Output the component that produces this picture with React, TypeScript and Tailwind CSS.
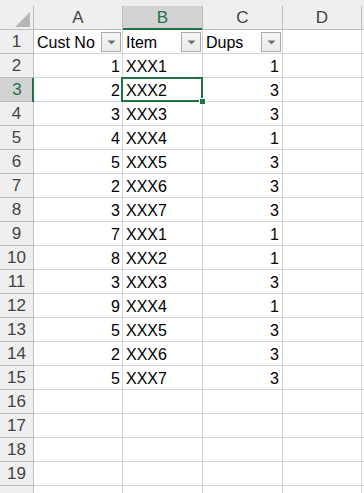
import React from "react";

const data: [number, string, number][] = [
  [1, "XXX1", 1],
  [2, "XXX2", 3],
  [3, "XXX3", 3],
  [4, "XXX4", 1],
  [5, "XXX5", 3],
  [2, "XXX6", 3],
  [3, "XXX7", 3],
  [7, "XXX1", 1],
  [8, "XXX2", 1],
  [3, "XXX3", 3],
  [9, "XXX4", 1],
  [5, "XXX5", 3],
  [2, "XXX6", 3],
  [5, "XXX7", 3],
];

function FilterBtn() {
  return (
    <div className="absolute right-[1px] top-[2px] w-[20px] h-[20px] border border-[#ababab] bg-gradient-to-b from-[#f7f7f7] to-[#e9e9e9] flex items-center justify-center">
      <svg width="9" height="5" viewBox="0 0 9 5">
        <polygon points="0.5,0.5 8.5,0.5 4.5,4.5" fill="#6f6f6f" />
      </svg>
    </div>
  );
}

const font = { fontFamily: '"Liberation Sans", Arial, sans-serif' };

export default function App() {
  const totalRows = 20;
  return (
    <div className="w-[364px] h-[493px] overflow-hidden bg-white text-black" style={font}>
      {/* top strip */}
      <div className="h-[6px] bg-[#ededed]" />
      {/* column headers */}
      <div className="flex h-[24px] bg-[#efefef] border-b border-[#bdbdbd] text-[17px] text-[#444]">
        <div className="relative w-[34px] shrink-0 border-r border-[#bdbdbd]">
          <svg className="absolute left-[15px] top-[6px]" width="16" height="16" viewBox="0 0 16 16">
            <polygon points="15,0 15,15 0,15" fill="#b5b5b5" />
          </svg>
        </div>
        <div className="w-[89px] shrink-0 border-r border-[#bdbdbd] flex items-center justify-center">A</div>
        <div className="relative w-[80px] shrink-0 border-r border-[#bdbdbd] bg-[#d3d3d3] text-[#217346] flex items-center justify-center">
          B
          <div className="absolute left-0 right-0 bottom-[-1px] h-[2px] bg-[#217346]" />
        </div>
        <div className="w-[80px] shrink-0 border-r border-[#bdbdbd] flex items-center justify-center">C</div>
        <div className="w-[79px] shrink-0 border-r border-[#bdbdbd] flex items-center justify-center">D</div>
        <div className="flex-1" />
      </div>
      {/* rows */}
      {Array.from({ length: totalRows }).map((_, i) => {
        const rowNum = i + 1;
        const isHeader = rowNum === 1;
        const d = rowNum >= 2 && rowNum <= 15 ? data[rowNum - 2] : null;
        const selected = rowNum === 3;
        return (
          <div key={rowNum} className="flex h-[24px] text-[16px]">
            <div
              className={
                selected
                  ? "relative w-[34px] shrink-0 border-b border-[#bdbdbd] bg-[#d3d3d3] text-[#217346] flex items-center justify-center text-[17px]"
                  : "relative w-[34px] shrink-0 border-b border-r border-[#bdbdbd] bg-[#efefef] text-[#444] flex items-center justify-center text-[17px]"
              }
            >
              {rowNum <= 19 ? rowNum : null}
              {selected && <div className="absolute right-0 top-0 bottom-[-1px] w-[2px] bg-[#217346]" />}
            </div>
            <div className="relative w-[89px] shrink-0 border-r border-b border-[#d4d4d4] flex items-center pt-[2px]">
              {isHeader && (
                <>
                  <span className="pl-[3px]">Cust No</span>
                  <FilterBtn />
                </>
              )}
              {d && <span className="ml-auto pr-[2px]">{d[0]}</span>}
            </div>
            <div className="relative w-[80px] shrink-0 border-r border-b border-[#d4d4d4] flex items-center pt-[2px]">
              {isHeader && (
                <>
                  <span className="pl-[3px]">Item</span>
                  <FilterBtn />
                </>
              )}
              {d && <span className="pl-[3px]">{d[1]}</span>}
              {selected && (
                <>
                  <div className="absolute left-[-2px] top-[-1px] right-[-1px] bottom-[-1px] border-2 border-[#217346] z-10" />
                  <div className="absolute right-[-4px] bottom-[-4px] w-[7px] h-[7px] bg-[#217346] border border-white z-20" />
                </>
              )}
            </div>
            <div className="relative w-[80px] shrink-0 border-r border-b border-[#d4d4d4] flex items-center pt-[2px]">
              {isHeader && (
                <>
                  <span className="pl-[3px]">Dups</span>
                  <FilterBtn />
                </>
              )}
              {d && <span className="ml-auto pr-[3px]">{d[2]}</span>}
            </div>
            <div className="w-[79px] shrink-0 border-r border-b border-[#d4d4d4]" />
            <div className="flex-1 border-b border-[#d4d4d4]" />
          </div>
        );
      })}
    </div>
  );
}
